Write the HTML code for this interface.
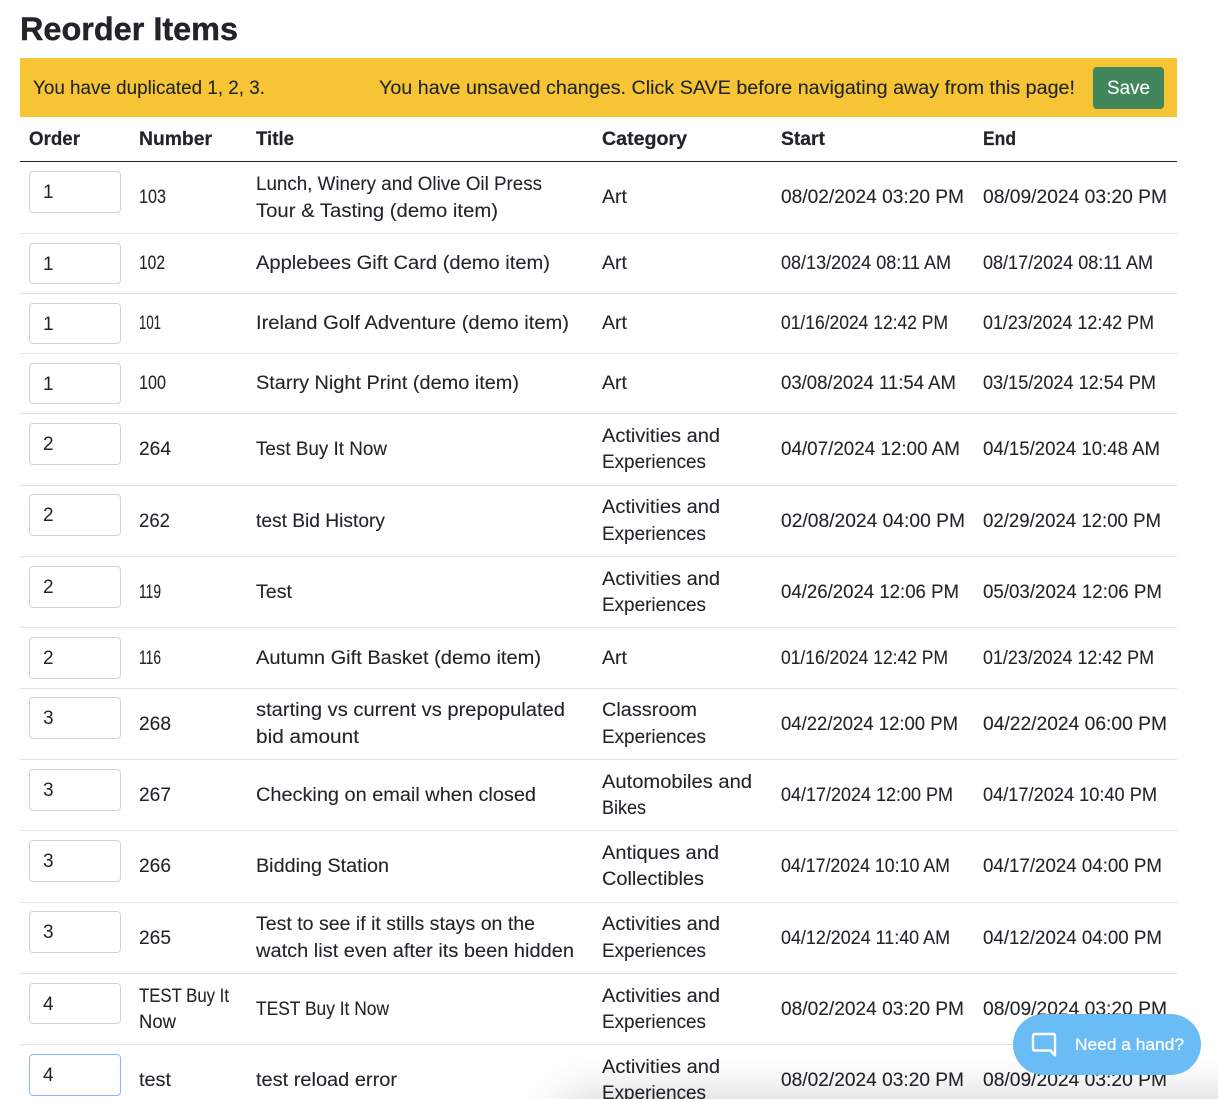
<!DOCTYPE html>
<html lang="en"><head><meta charset="utf-8"><title>Reorder Items</title>
<style>
html,body{margin:0;padding:0;background:#fff;width:1218px;height:1099px;overflow:hidden}
body{position:relative;font-family:"Liberation Sans",sans-serif}
svg{position:absolute;left:0;top:0}
svg text{font-family:"Liberation Sans",sans-serif;font-size:19px;fill:#212529;stroke:#212529;stroke-width:.1px}
svg text.b{font-weight:700;stroke-width:.2px}
input{position:absolute;left:29px;width:92px;height:42px;box-sizing:border-box;border:1px solid #ced4da;border-radius:4px;padding:2px 0 0 13px;margin:0;font:19px "Liberation Sans",sans-serif;color:#212529;background:#fff;outline:0}
.shade{position:absolute;left:570px;top:1106px;width:720px;height:60px;box-shadow:0 0 50px 5px rgba(0,0,0,.22)}
.chat{position:absolute;left:1013px;top:1014px;width:188px;height:61px;border-radius:31px;background:#6abcf4}
.chat svg{left:18px;top:17px}
.chat svg.t{left:0;top:0}
.chat svg.t text{font-size:17px;fill:#fff;stroke:#fff;stroke-width:.25px}
</style></head><body>
<svg width="1218" height="1099" viewBox="0 0 1218 1099">
<text class="b" x="20" y="40" style="font-size:32px;stroke-width:.4px" textLength="218" lengthAdjust="spacingAndGlyphs">Reorder Items</text>
<rect x="20" y="58" width="1157" height="59" fill="#f6c434"/>
<text x="33" y="94" textLength="232" lengthAdjust="spacingAndGlyphs">You have duplicated 1, 2, 3.</text>
<text x="379" y="94" textLength="696" lengthAdjust="spacingAndGlyphs">You have unsaved changes. Click SAVE before navigating away from this page!</text>
<rect x="1093" y="67" width="71" height="42" rx="4" fill="#41865a"/>
<text x="1107" y="94" textLength="43" lengthAdjust="spacingAndGlyphs" style="fill:#fff;stroke:#fff">Save</text>
<text class="b" x="29" y="145" textLength="51" lengthAdjust="spacingAndGlyphs">Order</text>
<text class="b" x="139" y="145" textLength="73" lengthAdjust="spacingAndGlyphs">Number</text>
<text class="b" x="256" y="145" textLength="38" lengthAdjust="spacingAndGlyphs">Title</text>
<text class="b" x="602" y="145" textLength="85" lengthAdjust="spacingAndGlyphs">Category</text>
<text class="b" x="781" y="145" textLength="44" lengthAdjust="spacingAndGlyphs">Start</text>
<text class="b" x="983" y="145" textLength="33" lengthAdjust="spacingAndGlyphs">End</text>
<rect x="20" y="161" width="1157" height="1" fill="#212529"/>
<g fill="#dee2e6">
<rect x="20" y="233" width="1157" height="1"/><rect x="20" y="293" width="1157" height="1"/><rect x="20" y="353" width="1157" height="1"/><rect x="20" y="413" width="1157" height="1"/><rect x="20" y="485" width="1157" height="1"/><rect x="20" y="556" width="1157" height="1"/><rect x="20" y="627" width="1157" height="1"/><rect x="20" y="688" width="1157" height="1"/><rect x="20" y="759" width="1157" height="1"/><rect x="20" y="830" width="1157" height="1"/><rect x="20" y="902" width="1157" height="1"/><rect x="20" y="973" width="1157" height="1"/><rect x="20" y="1044" width="1157" height="1"/>
</g>

<text x="139" y="203" textLength="27" lengthAdjust="spacingAndGlyphs">103</text>
<text x="256" y="190" textLength="286" lengthAdjust="spacingAndGlyphs">Lunch, Winery and Olive Oil Press</text>
<text x="256" y="217" textLength="242" lengthAdjust="spacingAndGlyphs">Tour &amp; Tasting (demo item)</text>
<text x="602" y="203" textLength="25" lengthAdjust="spacingAndGlyphs">Art</text>
<text x="781" y="203" textLength="183" lengthAdjust="spacingAndGlyphs">08/02/2024 03:20 PM</text>
<text x="983" y="203" textLength="184" lengthAdjust="spacingAndGlyphs">08/09/2024 03:20 PM</text>

<text x="139" y="269" textLength="26" lengthAdjust="spacingAndGlyphs">102</text>
<text x="256" y="269" textLength="294" lengthAdjust="spacingAndGlyphs">Applebees Gift Card (demo item)</text>
<text x="602" y="269" textLength="25" lengthAdjust="spacingAndGlyphs">Art</text>
<text x="781" y="269" textLength="170" lengthAdjust="spacingAndGlyphs">08/13/2024 08:11 AM</text>
<text x="983" y="269" textLength="170" lengthAdjust="spacingAndGlyphs">08/17/2024 08:11 AM</text>

<text x="139" y="329" textLength="22" lengthAdjust="spacingAndGlyphs">101</text>
<text x="256" y="329" textLength="313" lengthAdjust="spacingAndGlyphs">Ireland Golf Adventure (demo item)</text>
<text x="602" y="329" textLength="25" lengthAdjust="spacingAndGlyphs">Art</text>
<text x="781" y="329" textLength="167" lengthAdjust="spacingAndGlyphs">01/16/2024 12:42 PM</text>
<text x="983" y="329" textLength="171" lengthAdjust="spacingAndGlyphs">01/23/2024 12:42 PM</text>

<text x="139" y="389" textLength="27" lengthAdjust="spacingAndGlyphs">100</text>
<text x="256" y="389" textLength="263" lengthAdjust="spacingAndGlyphs">Starry Night Print (demo item)</text>
<text x="602" y="389" textLength="25" lengthAdjust="spacingAndGlyphs">Art</text>
<text x="781" y="389" textLength="175" lengthAdjust="spacingAndGlyphs">03/08/2024 11:54 AM</text>
<text x="983" y="389" textLength="173" lengthAdjust="spacingAndGlyphs">03/15/2024 12:54 PM</text>

<text x="139" y="455" textLength="32" lengthAdjust="spacingAndGlyphs">264</text>
<text x="256" y="455" textLength="131" lengthAdjust="spacingAndGlyphs">Test Buy It Now</text>
<text x="602" y="442" textLength="118" lengthAdjust="spacingAndGlyphs">Activities and</text>
<text x="602" y="468" textLength="104" lengthAdjust="spacingAndGlyphs">Experiences</text>
<text x="781" y="455" textLength="179" lengthAdjust="spacingAndGlyphs">04/07/2024 12:00 AM</text>
<text x="983" y="455" textLength="177" lengthAdjust="spacingAndGlyphs">04/15/2024 10:48 AM</text>

<text x="139" y="527" textLength="31" lengthAdjust="spacingAndGlyphs">262</text>
<text x="256" y="527" textLength="129" lengthAdjust="spacingAndGlyphs">test Bid History</text>
<text x="602" y="513" textLength="118" lengthAdjust="spacingAndGlyphs">Activities and</text>
<text x="602" y="540" textLength="104" lengthAdjust="spacingAndGlyphs">Experiences</text>
<text x="781" y="527" textLength="184" lengthAdjust="spacingAndGlyphs">02/08/2024 04:00 PM</text>
<text x="983" y="527" textLength="178" lengthAdjust="spacingAndGlyphs">02/29/2024 12:00 PM</text>

<text x="139" y="598" textLength="22" lengthAdjust="spacingAndGlyphs">119</text>
<text x="256" y="598" textLength="36" lengthAdjust="spacingAndGlyphs">Test</text>
<text x="602" y="585" textLength="118" lengthAdjust="spacingAndGlyphs">Activities and</text>
<text x="602" y="611" textLength="104" lengthAdjust="spacingAndGlyphs">Experiences</text>
<text x="781" y="598" textLength="178" lengthAdjust="spacingAndGlyphs">04/26/2024 12:06 PM</text>
<text x="983" y="598" textLength="179" lengthAdjust="spacingAndGlyphs">05/03/2024 12:06 PM</text>

<text x="139" y="664" textLength="22" lengthAdjust="spacingAndGlyphs">116</text>
<text x="256" y="664" textLength="285" lengthAdjust="spacingAndGlyphs">Autumn Gift Basket (demo item)</text>
<text x="602" y="664" textLength="25" lengthAdjust="spacingAndGlyphs">Art</text>
<text x="781" y="664" textLength="167" lengthAdjust="spacingAndGlyphs">01/16/2024 12:42 PM</text>
<text x="983" y="664" textLength="171" lengthAdjust="spacingAndGlyphs">01/23/2024 12:42 PM</text>

<text x="139" y="730" textLength="32" lengthAdjust="spacingAndGlyphs">268</text>
<text x="256" y="716" textLength="309" lengthAdjust="spacingAndGlyphs">starting vs current vs prepopulated</text>
<text x="256" y="743" textLength="103" lengthAdjust="spacingAndGlyphs">bid amount</text>
<text x="602" y="716" textLength="95" lengthAdjust="spacingAndGlyphs">Classroom</text>
<text x="602" y="743" textLength="104" lengthAdjust="spacingAndGlyphs">Experiences</text>
<text x="781" y="730" textLength="177" lengthAdjust="spacingAndGlyphs">04/22/2024 12:00 PM</text>
<text x="983" y="730" textLength="184" lengthAdjust="spacingAndGlyphs">04/22/2024 06:00 PM</text>

<text x="139" y="801" textLength="32" lengthAdjust="spacingAndGlyphs">267</text>
<text x="256" y="801" textLength="280" lengthAdjust="spacingAndGlyphs">Checking on email when closed</text>
<text x="602" y="788" textLength="150" lengthAdjust="spacingAndGlyphs">Automobiles and</text>
<text x="602" y="814" textLength="44" lengthAdjust="spacingAndGlyphs">Bikes</text>
<text x="781" y="801" textLength="172" lengthAdjust="spacingAndGlyphs">04/17/2024 12:00 PM</text>
<text x="983" y="801" textLength="174" lengthAdjust="spacingAndGlyphs">04/17/2024 10:40 PM</text>

<text x="139" y="872" textLength="32" lengthAdjust="spacingAndGlyphs">266</text>
<text x="256" y="872" textLength="133" lengthAdjust="spacingAndGlyphs">Bidding Station</text>
<text x="602" y="859" textLength="117" lengthAdjust="spacingAndGlyphs">Antiques and</text>
<text x="602" y="885" textLength="102" lengthAdjust="spacingAndGlyphs">Collectibles</text>
<text x="781" y="872" textLength="169" lengthAdjust="spacingAndGlyphs">04/17/2024 10:10 AM</text>
<text x="983" y="872" textLength="179" lengthAdjust="spacingAndGlyphs">04/17/2024 04:00 PM</text>

<text x="139" y="944" textLength="32" lengthAdjust="spacingAndGlyphs">265</text>
<text x="256" y="930" textLength="279" lengthAdjust="spacingAndGlyphs">Test to see if it stills stays on the</text>
<text x="256" y="957" textLength="318" lengthAdjust="spacingAndGlyphs">watch list even after its been hidden</text>
<text x="602" y="930" textLength="118" lengthAdjust="spacingAndGlyphs">Activities and</text>
<text x="602" y="957" textLength="104" lengthAdjust="spacingAndGlyphs">Experiences</text>
<text x="781" y="944" textLength="169" lengthAdjust="spacingAndGlyphs">04/12/2024 11:40 AM</text>
<text x="983" y="944" textLength="179" lengthAdjust="spacingAndGlyphs">04/12/2024 04:00 PM</text>

<text x="139" y="1002" textLength="90" lengthAdjust="spacingAndGlyphs">TEST Buy It</text>
<text x="139" y="1028" textLength="37" lengthAdjust="spacingAndGlyphs">Now</text>
<text x="256" y="1015" textLength="133" lengthAdjust="spacingAndGlyphs">TEST Buy It Now</text>
<text x="602" y="1002" textLength="118" lengthAdjust="spacingAndGlyphs">Activities and</text>
<text x="602" y="1028" textLength="104" lengthAdjust="spacingAndGlyphs">Experiences</text>
<text x="781" y="1015" textLength="183" lengthAdjust="spacingAndGlyphs">08/02/2024 03:20 PM</text>
<text x="983" y="1015" textLength="184" lengthAdjust="spacingAndGlyphs">08/09/2024 03:20 PM</text>

<text x="139" y="1086" textLength="32" lengthAdjust="spacingAndGlyphs">test</text>
<text x="256" y="1086" textLength="141" lengthAdjust="spacingAndGlyphs">test reload error</text>
<text x="602" y="1073" textLength="118" lengthAdjust="spacingAndGlyphs">Activities and</text>
<text x="602" y="1099" textLength="104" lengthAdjust="spacingAndGlyphs">Experiences</text>
<text x="781" y="1086" textLength="183" lengthAdjust="spacingAndGlyphs">08/02/2024 03:20 PM</text>
<text x="983" y="1086" textLength="184" lengthAdjust="spacingAndGlyphs">08/09/2024 03:20 PM</text>
</svg>

<input value="1" style="top:171px"><input value="1" style="top:243px;height:41px"><input value="1" style="top:303px;height:41px"><input value="1" style="top:363px;height:41px">
<input value="2" style="top:423px"><input value="2" style="top:494px"><input value="2" style="top:566px"><input value="2" style="top:637px">
<input value="3" style="top:697px"><input value="3" style="top:769px"><input value="3" style="top:840px"><input value="3" style="top:911px">
<input value="4" style="top:983px;height:41px"><input value="4" style="top:1054px;border-color:#86b7fe">

<div class="shade"></div>
<div class="chat">
<svg width="26" height="28" viewBox="0 0 26 28"><path d="M4 3H22Q24 3 24 5V24.5L19.5 19.5H4Q2 19.5 2 17.5V5Q2 3 4 3Z" fill="none" stroke="#fff" stroke-width="2.4" stroke-linejoin="round"/></svg>
<svg class="t" width="188" height="61" viewBox="0 0 188 61"><text x="62" y="36" textLength="109" lengthAdjust="spacingAndGlyphs">Need a hand?</text></svg>
</div>
</body></html>
